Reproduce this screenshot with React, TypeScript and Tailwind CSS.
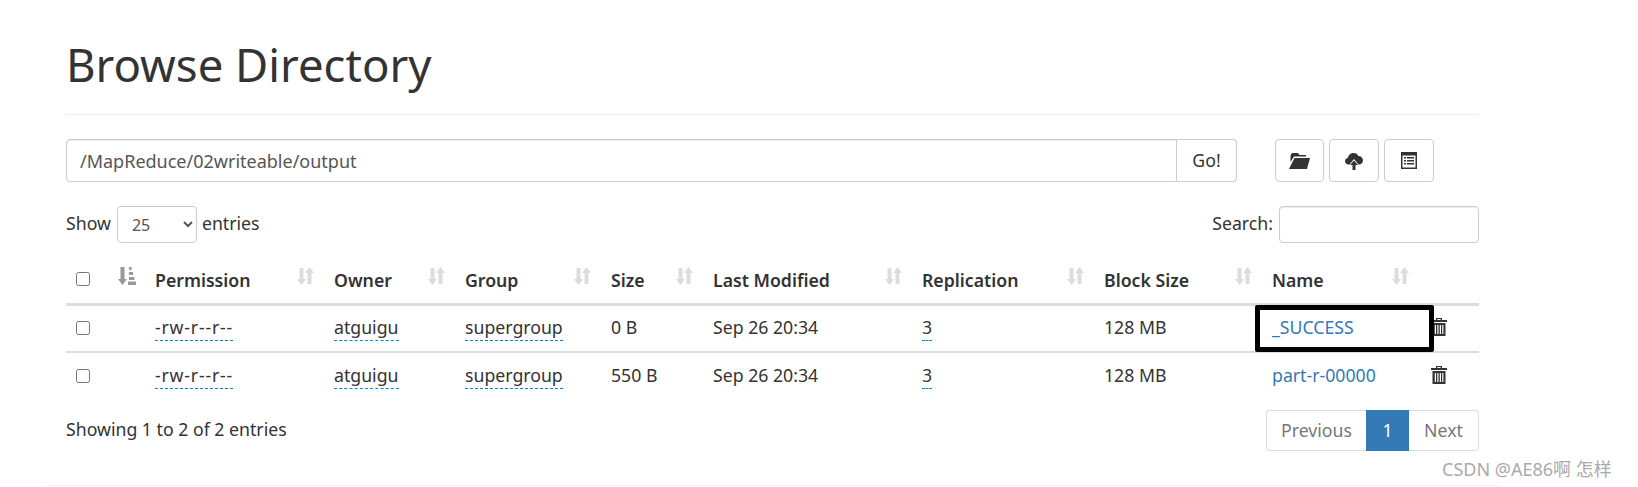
const FONT = "font-['Noto_Sans','Liberation_Sans','Noto_Sans_CJK_SC',sans-serif]";

function SortIcon() {
  return (
    <svg viewBox="0 0 17 18" className="absolute right-[12px] top-[11px] h-[18px] w-[17px] fill-[#ddd]">
      <path d="M2.500 1h4v11h2.500l-4.500 6-4.500-6h2.500z" />
      <path d="M10.500 17h4V6H17L12.500 0 8 6h2.500z" />
    </svg>
  );
}

function SortedIcon() {
  return (
    <svg viewBox="0 0 18 18" className="absolute left-[10px] top-[11px] h-[18px] w-[18px] fill-[#999]">
      <path d="M2.500 0h4v12H9l-4.500 6L0 12h2.500z" />
      <path d="M11 0h2.500v3H11zM11 5h4v3h-4zM11 10h5.500v3H11zM10 14.500h8V18h-8z" />
    </svg>
  );
}

function FolderIcon() {
  return (
    <svg viewBox="0 0 21 16" className="h-[16px] w-[21px] fill-[#333]">
      <path d="M3 0h6l1.500 2H17v1.500H5L1.500 9V2.500z" />
      <path d="M5.500 5H21l-3 11H0z" />
    </svg>
  );
}

function CloudIcon() {
  return (
    <svg viewBox="0 0 18 18" className="h-[18px] w-[18px] fill-[#333]">
      <path d="M4.500 12.500H3.500C1.500 12.500 0 11 0 9.200 0 7.500 1.200 6.200 2.800 6 3.300 3.500 5.200 1 8.500 1c2.500 0 4 1.300 4.800 3 2.700 0 4.700 2 4.700 4.500 0 2.200-1.700 4-4 4h-.5L9 7z" />
      <path d="M9 8.500l4 4.500h-2.500v5h-3v-5H5z" />
    </svg>
  );
}

function ListIcon() {
  return (
    <svg viewBox="0 0 16 17" className="h-[17px] w-[16px]">
      <path className="fill-[#333]" fillRule="evenodd" d="M0 0h16v17H0zM1.500 3.500v12h13v-12z" />
      <path className="fill-[#333]" d="M3 5h2v1.500H3zM6 5h7v1.500H6zM3 8h2v1.500H3zM6 8h7v1.500H6zM3 11h2v1.500H3zM6 11h7v1.500H6z" />
    </svg>
  );
}

function TrashIcon() {
  return (
    <svg viewBox="0 0 16 18" className="h-[18px] w-[16px] fill-[#333]">
      <path d="M5 0h6v2h5v2H0V2h5zM6.300 1v1h3.400V1z" />
      <path fillRule="evenodd" d="M1.500 5h13v13h-13zM3.800 7v9h1.200V7zM6.300 7v9h1.200V7zM8.800 7v9H10V7zM11.200 7v9h1.200V7z" />
    </svg>
  );
}

function Editable({ children, wide }: { children: string; wide?: boolean }) {
  return (
    <span className={`inline-block border-b border-dashed border-[#0088cc] pb-[1px] leading-[23px] ${wide ? "tracking-[0.8px]" : ""}`}>
      {children}
    </span>
  );
}

const headers = [
  { label: "Permission", w: "w-[179px]" },
  { label: "Owner", w: "w-[131px]" },
  { label: "Group", w: "w-[146px]" },
  { label: "Size", w: "w-[102px]" },
  { label: "Last Modified", w: "w-[209px]" },
  { label: "Replication", w: "w-[182px]" },
  { label: "Block Size", w: "w-[168px]" },
  { label: "Name", w: "w-[157px]" },
];

const rows = [
  { size: "0 B", name: "_SUCCESS" },
  { size: "550 B", name: "part-r-00000" },
];

export default function App() {
  return (
    <div className={`relative h-[487px] w-[1638px] overflow-hidden bg-white text-[17.7px] text-[#333] ${FONT}`}>
      <div className="ml-[47px] h-[486px] w-[1451px] border-b border-[#eee] px-[19px]">
        {/* Title */}
        <div className="flex h-[115px] items-center border-b border-[#eee] pt-[16px]">
          <h1 className="text-[45.5px] font-normal leading-none">Browse Directory</h1>
        </div>

        {/* Path bar */}
        <div className="mt-[24px] flex h-[43px]">
          <input
            readOnly
            value="/MapReduce/02writeable/output"
            className="h-full w-[1111px] rounded-l-[4px] border border-[#ccc] px-[13px] text-[18px] text-[#555] shadow-[inset_0_1px_1px_rgba(0,0,0,0.075)] outline-none"
          />
          <button className="h-full w-[60px] rounded-r-[4px] border border-l-0 border-[#ccc] bg-white">Go!</button>
          <div className="ml-[38px] flex gap-[5px]">
            <button className="flex h-[43px] w-[49px] items-center justify-center rounded-[4px] border border-[#ccc]"><FolderIcon /></button>
            <button className="flex h-[43px] w-[50px] items-center justify-center rounded-[4px] border border-[#ccc]"><CloudIcon /></button>
            <button className="flex h-[43px] w-[50px] items-center justify-center rounded-[4px] border border-[#ccc]"><ListIcon /></button>
          </div>
        </div>

        {/* Length + search */}
        <div className="mt-[24px] flex h-[37px] items-center justify-between">
          <div className="flex items-center">
            <span className="pb-[3px]">Show</span>
            <select className="ml-[6px] mr-[5px] h-[37px] w-[80px] rounded-[4px] border border-[#ccc] bg-white pl-[10px] text-[16px] text-[#555]">
              <option>25</option>
            </select>
            <span className="pb-[3px]">entries</span>
          </div>
          <div className="flex items-center">
            <span className="mr-[6px] pb-[3px]">Search:</span>
            <input className="h-[37px] w-[200px] rounded-[4px] border border-[#ccc] shadow-[inset_0_1px_1px_rgba(0,0,0,0.075)]" />
          </div>
        </div>

        {/* Table */}
        <table className="mt-[13px] w-[1413px] table-fixed border-collapse">
          <thead>
            <tr className="h-[48px] border-b-[3px] border-[#ddd]">
              <th className="w-[42px] pl-[10px] text-left align-middle">
                <input type="checkbox" className="block h-[14px] w-[14px]" />
              </th>
              <th className="relative w-[39px]">
                <SortedIcon />
              </th>
              {headers.map((h) => (
                <th key={h.label} className={`relative ${h.w} pl-[8px] pt-[2px] text-left font-semibold`}>
                  {h.label}
                  <SortIcon />
                </th>
              ))}
              <th className="w-[58px]" />
            </tr>
          </thead>
          <tbody>
            {rows.map((r, i) => (
              <tr key={r.name} className={i === 0 ? "h-[48px] border-b-2 border-[#ddd]" : "h-[47px]"}>
                <td className="pb-[1px] pl-[10px]">
                  <input type="checkbox" className="block h-[14px] w-[14px]" />
                </td>
                <td />
                <td className="pb-[1px] pl-[8px]"><Editable wide>-rw-r--r--</Editable></td>
                <td className="pb-[1px] pl-[8px]"><Editable>atguigu</Editable></td>
                <td className="pb-[1px] pl-[8px]"><Editable>supergroup</Editable></td>
                <td className="pb-[2px] pl-[8px]">{r.size}</td>
                <td className="pb-[2px] pl-[8px]">Sep 26 20:34</td>
                <td className="pb-[1px] pl-[8px]"><Editable>3</Editable></td>
                <td className="pb-[2px] pl-[8px]">128 MB</td>
                <td className="pb-[2px] pl-[8px] text-[#337ab7]">{r.name}</td>
                <td className="pb-[2px] pl-[10px]"><TrashIcon /></td>
              </tr>
            ))}
          </tbody>
        </table>

        {/* Footer */}
        <div className="mt-[11px] flex h-[41px] items-center justify-between">
          <span className="pb-[3px]">Showing 1 to 2 of 2 entries</span>
          <div className="flex h-[41px] text-[#777]">
            <span className="flex w-[100px] items-center justify-center rounded-l-[4px] border border-r-0 border-[#ddd]">Previous</span>
            <span className="flex w-[43px] items-center justify-center bg-[#337ab7] text-white">1</span>
            <span className="flex w-[70px] items-center justify-center rounded-r-[4px] border border-l-0 border-[#ddd]">Next</span>
          </div>
        </div>
      </div>

      {/* Annotation drawn on the screenshot */}
      <div className="absolute left-[1255px] top-[305px] h-[47px] w-[179px] rounded-[2px] border-[5px] border-black" />

      {/* Watermark */}
      <span className="absolute left-[1442px] top-[457px] text-[18px] leading-[24px] text-[#aaa]">CSDN @AE86啊 怎样</span>
    </div>
  );
}
